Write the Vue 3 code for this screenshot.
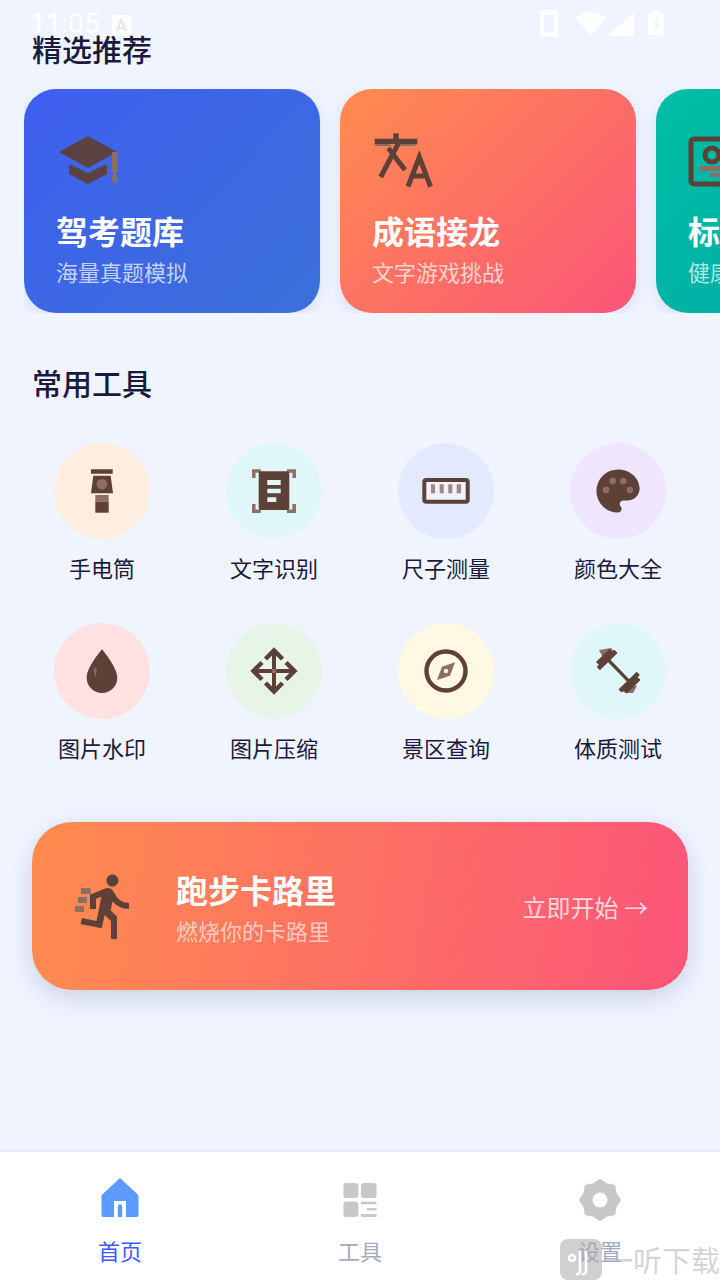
<template>
  <div class="page">
    <div class="status-bar">
      <span class="time">11:05</span>
      <span class="ime">A</span>
      <svg class="status-icons" width="124" height="28" viewBox="0 0 124 28">
        <path fill-rule="evenodd" fill="#fff" d="M2 0h14a2 2 0 0 1 2 2v23a2 2 0 0 1-2 2H2a2 2 0 0 1-2-2V2a2 2 0 0 1 2-2zM4 5v17h10V5z" />
        <path fill="#fff" d="M36 8Q51-4 66 8L51 26z" />
        <path fill="#fff" d="M94 2v24H68z" />
        <path fill="#fff" d="M112 0h8v3h4v22h-16V3h4z" />
        <path fill="#f0f4ff" d="M117 6l-4 10h3l-1 7 5-10h-3l1-7z" />
      </svg>
    </div>

    <h2 class="heading first">精选推荐</h2>

    <div class="featured">
      <div v-for="card in cards" :key="card.title" class="feature-card" :class="card.tone">
        <svg v-if="card.tone === 'blue'" class="feature-icon" viewBox="0 0 64 64">
          <path fill="#5d4037" fill-opacity=".95" d="M3 24L32 8l29 16-29 16z" />
          <path fill="#5d4037" fill-opacity=".95" d="M13 36v10l19 10 19-10V36l-19 9z" />
          <path fill="#8d6e63" d="M56 24h5.500v20H56zM58.750 43c2 3.500 2.750 5.500 2.750 9a2.750 3 0 0 1-5.500 0c0-3.500.75-5.500 2.750-9z" />
        </svg>
        <svg v-else-if="card.tone === 'orange'" class="feature-icon" viewBox="0 0 64 64">
          <path fill="#8d6e63" d="M3 16h13l12 4-3-4h21l-4 2-39 0z" />
          <path fill="#5d4037" d="M2.700 10.700h42.600V16H2.700zM21.300 5.300h5.400v5.400h-5.400z" />
          <path fill="none" stroke="#5d4037" stroke-width="5" d="M16.300 20L33 42M26.300 15.300L8.700 49" />
          <path fill="none" stroke="#5d4037" stroke-width="5" d="M36 58.700L47.300 29l11.200 29.700M39 48h17" />
        </svg>
        <svg v-else class="feature-icon" viewBox="0 0 64 64">
          <rect x="3" y="11" width="48" height="45" rx="3" fill="none" stroke="#5d4037" stroke-width="5" />
          <circle cx="24" cy="27" r="7" fill="none" stroke="#5d4037" stroke-width="5" />
          <path fill="#8d6e63" d="M12 38h30v5H12zM22 45h20v4H22z" />
        </svg>
        <div class="feature-title">{{ card.title }}</div>
        <div class="feature-sub">{{ card.sub }}</div>
      </div>
    </div>

    <h2 class="heading second">常用工具</h2>

    <div class="tools">
      <div class="tool">
        <div class="tool-circle" style="background: #ffeee0">
          <svg class="tool-icon" viewBox="0 0 48 48">
            <path fill="#5d4037" d="M13 2.300h21.700v4.400H13zM15.300 8.700h17.400L35 26.300H13z" />
            <circle cx="24" cy="17.300" r="5.300" fill="#8d6e63" />
            <path fill="#8d6e63" d="M17.300 28h13.400v6.700H17.300z" />
            <path fill="#5d4037" d="M17.300 34.700h13.400v11H17.300z" />
          </svg>
        </div>
        <span class="tool-label">手电筒</span>
      </div>
      <div class="tool">
        <div class="tool-circle" style="background: #dff7f9">
          <svg class="tool-icon" viewBox="0 0 48 48">
            <path fill="none" stroke="#8d6e63" stroke-width="3.500" d="M3.800 11V4h7M37 4h7.200v7M3.800 37v7.200h7M37 44.200h7.200V37" />
            <path fill="#5d4037" fill-rule="evenodd" d="M10.700 4.300h26.600a2 2 0 0 1 2 2V41a2 2 0 0 1-2 2H10.700a2 2 0 0 1-2-2V6.300a2 2 0 0 1 2-2zM17.300 13v5h13.400v-5zM17.300 21.700v4.600h13.400v-4.600zM17.300 30.300V35h9v-4.700z" />
          </svg>
        </div>
        <span class="tool-label">文字识别</span>
      </div>
      <div class="tool">
        <div class="tool-circle" style="background: #e3e9ff">
          <svg class="tool-icon" viewBox="0 0 48 48">
            <rect x="2.300" y="13" width="43.400" height="21.700" rx="2" fill="#eef1ff" stroke="#5d4037" stroke-width="4" />
            <path fill="#a1887f" d="M9 17.300h4v9H9zM17.700 17.300h4v9h-4zM26.300 17.300h4v9h-4zM34.700 17.300H39v9h-4.300z" />
          </svg>
        </div>
        <span class="tool-label">尺子测量</span>
      </div>
      <div class="tool">
        <div class="tool-circle" style="background: #f0e5ff">
          <svg class="tool-icon" viewBox="2 2 20 20">
            <path fill="#5d4037" d="M12 3a9 9 0 0 0 0 18c.83 0 1.500-.67 1.500-1.500 0-.39-.15-.74-.39-1.010-.23-.26-.38-.61-.38-.99 0-.83.67-1.500 1.500-1.500H16c2.760 0 5-2.240 5-5 0-4.420-4.030-8-9-8z" />
            <circle cx="9.800" cy="7.800" r="1.350" fill="#8d6e63" />
            <circle cx="14.200" cy="7.800" r="1.350" fill="#8d6e63" />
            <circle cx="7" cy="11.600" r="1.350" fill="#8d6e63" />
            <circle cx="17" cy="11.600" r="1.350" fill="#8d6e63" />
          </svg>
        </div>
        <span class="tool-label">颜色大全</span>
      </div>

      <div class="tool">
        <div class="tool-circle" style="background: #ffe1e1">
          <svg class="tool-icon" viewBox="0 0 48 48">
            <path fill="#5d4037" d="M24 2.300C24 2.300 8.700 20 8.700 30.700a15.300 15.300 0 0 0 30.600 0C39.300 20 24 2.300 24 2.300z" />
            <path fill="#8d6e63" d="M16.500 20l2.300 3-1 7c-1.500-3-2.300-6-1.300-10z" />
          </svg>
        </div>
        <span class="tool-label">图片水印</span>
      </div>
      <div class="tool">
        <div class="tool-circle" style="background: #e7f5e9">
          <svg class="tool-icon" viewBox="0 0 48 48">
            <path fill="none" stroke="#5d4037" stroke-width="4" d="M24 4v40M4 24h40" />
            <path fill="none" stroke="#5d4037" stroke-width="4.500" d="M15.500 12L24 3.500 32.500 12M15.500 36l8.500 8.500 8.500-8.500M12 15.500L3.500 24l8.500 8.500M36 15.500l8.500 8.500-8.500 8.500" />
            <rect x="22" y="22" width="4" height="4" fill="#8d6e63" />
          </svg>
        </div>
        <span class="tool-label">图片压缩</span>
      </div>
      <div class="tool">
        <div class="tool-circle" style="background: #fff8e3">
          <svg class="tool-icon" viewBox="0 0 48 48">
            <circle cx="24" cy="24" r="19.500" fill="none" stroke="#5d4037" stroke-width="4.400" />
            <path fill="#8d6e63" d="M33 15.300L28 28.700 15 33l5-13.300z" />
            <circle cx="24" cy="24" r="2.200" fill="#fff8e3" />
          </svg>
        </div>
        <span class="tool-label">景区查询</span>
      </div>
      <div class="tool">
        <div class="tool-circle" style="background: #dff7f9">
          <svg class="tool-icon" viewBox="0 0 48 48">
            <path fill="#8d6e63" d="M5 3l12-2 5 5-11 9zM28 44l6-8 9 3-4 7-7 0z" transform="translate(0 0)" />
            <path fill="none" stroke="#5d4037" stroke-width="3.300" d="M14.300 13l20 20.700" />
            <path fill="none" stroke="#5d4037" stroke-width="4.500" d="M22 4.300L4.300 21.700M17 3.500L3.500 16.500M44.300 26.300L26 44M45 31.500L31 45" />
          </svg>
        </div>
        <span class="tool-label">体质测试</span>
      </div>
    </div>

    <div class="banner">
      <svg class="banner-icon" viewBox="0 0 24 24">
        <path fill="#8d6e63" d="M3 6h3.200v2H3zM2 9h3v2H2zM1 12h3v2H1z" />
        <path fill="#5d4037" d="M13.490 5.480c1.100 0 2-.9 2-2s-.9-2-2-2-2 .9-2 2 .9 2 2 2zm-3.600 13.900l1-4.400 2.100 2v6h2v-7.500l-2.100-2 .6-3c1.300 1.500 3.300 2.500 5.500 2.500v-2c-1.900 0-3.500-1-4.300-2.400l-1-1.600c-.4-.6-1-1-1.700-1-.3 0-.5.1-.8.1l-5.200 2.200v4.700h2v-3.400l1.800-.7-1.600 8.100-4.900-1-.4 2 7 1.400z" />
      </svg>
      <div class="banner-text">
        <div class="banner-title">跑步卡路里</div>
        <div class="banner-sub">燃烧你的卡路里</div>
      </div>
      <div class="banner-cta">立即开始 →</div>
    </div>

    <nav class="tabbar">
      <div class="tab active">
        <svg class="tab-icon" viewBox="0 0 44 44">
          <path fill="#5c9aff" d="M22 0l17.700 16.500a2 2 0 0 1 .8 1.500v19a2 2 0 0 1-2 2H5.500a2 2 0 0 1-2-2V18a2 2 0 0 1 .8-1.500z" />
          <path fill="#fff" d="M16 39V23h12v16h-3.800V28.500a2 2 0 0 0-4.400 0V39z" />
        </svg>
        <span>首页</span>
      </div>
      <div class="tab">
        <svg class="tab-icon" viewBox="0 0 44 44">
          <g fill="#c8c8c8">
            <rect x="5.400" y="5" width="15" height="15" rx="3" />
            <rect x="23" y="5" width="15.500" height="15" rx="3" />
            <rect x="5.400" y="23.500" width="15" height="15.500" rx="3" />
            <rect x="23" y="23.700" width="15.500" height="2.500" />
            <rect x="29" y="30" width="9.500" height="2.500" />
            <rect x="23" y="36" width="15.500" height="3" />
          </g>
        </svg>
        <span>工具</span>
      </div>
      <div class="tab">
        <svg class="tab-icon" viewBox="-22 -22 44 44">
          <path fill="#c8c8c8" stroke="#c8c8c8" stroke-width="3" stroke-linejoin="round" fill-rule="evenodd" d="M19.500 0L15.200 6.300 13.800 13.800 6.300 15.200 0 19.500-6.300 15.200-13.800 13.800-15.200 6.300-19.500 0-15.200-6.300-13.800-13.800-6.300-15.200 0-19.500 6.300-15.200 13.800-13.800 15.200-6.300z" />
          <circle r="7.500" fill="#fff" />
        </svg>
        <span>设置</span>
      </div>
    </nav>

    <div class="watermark">
      <div class="wm-logo">
        <svg width="42" height="41" viewBox="0 0 42 41">
          <circle cx="12" cy="19" r="3" fill="none" stroke="#fff" stroke-width="2.500" />
          <path fill="none" stroke="#fff" stroke-width="2.500" d="M20 12v20a3 3 0 0 1-4 3M26 12v20a3 3 0 0 1-4 3" />
        </svg>
      </div>
      <span class="wm-text">一听下载</span>
    </div>
  </div>
</template>

<script setup>
const cards = [
  { title: '驾考题库', sub: '海量真题模拟', tone: 'blue' },
  { title: '成语接龙', sub: '文字游戏挑战', tone: 'orange' },
  { title: '标准体重', sub: '健康体重计算', tone: 'teal' }
];
</script>

<style>
html,
body {
  margin: 0;
  background: #f0f4ff;
}
</style>

<style scoped>
.page {
  position: relative;
  width: 720px;
  height: 1280px;
  overflow: hidden;
  display: flex;
  flex-direction: column;
  background: #f0f4ff;
  font-family: "Noto Sans CJK SC", "Noto Sans", sans-serif;
  color: #1a1a3e;
}

.status-bar {
  position: absolute;
  top: 0;
  left: 0;
  right: 0;
  height: 48px;
  padding: 0 56px 0 30px;
  display: flex;
  align-items: center;
  color: #fff;
  z-index: 2;
}

.time {
  font-family: Roboto, sans-serif;
  font-size: 28px;
  line-height: 48px;
}

.ime {
  width: 19px;
  height: 20px;
  margin-left: 12px;
  margin-top: 1px;
  background: #fff;
  border-radius: 2px;
  color: #e3e8f5;
  font-family: Roboto, sans-serif;
  font-size: 17px;
  font-weight: 700;
  line-height: 20px;
  text-align: center;
}

.status-icons {
  margin-left: auto;
  margin-top: -1px;
}

.heading {
  margin: 0;
  padding-left: 32px;
  font-size: 30px;
  font-weight: 500;
  line-height: 40px;
}

.heading.first {
  margin-top: 28px;
}

.heading.second {
  margin-top: 49px;
}

.featured {
  margin: 21px 0 0 24px;
  height: 224px;
  overflow: hidden;
  display: flex;
  gap: 20px;
}

.feature-card {
  flex: 0 0 296px;
  height: 224px;
  box-sizing: border-box;
  padding: 39px 0 0 32px;
  border-radius: 32px;
  color: #fff;
  box-shadow: 0 4px 16px rgba(60, 80, 160, 0.12);
}

.feature-card.blue {
  background: linear-gradient(135deg, #3f5ff0, #3b70d8);
}

.feature-card.orange {
  background: linear-gradient(135deg, #ff8c4f, #fb5579);
}

.feature-card.teal {
  background: linear-gradient(135deg, #00bfa5, #00a5a5);
}

.feature-icon {
  display: block;
  width: 64px;
  height: 64px;
}

.feature-title {
  margin-top: 16px;
  font-size: 32px;
  font-weight: 700;
  line-height: 44px;
  white-space: nowrap;
}

.feature-sub {
  margin-top: 4px;
  font-size: 22px;
  line-height: 30px;
  color: rgba(255, 255, 255, 0.7);
  white-space: nowrap;
}

.tools {
  margin-top: 41px;
  padding: 0 16px;
  display: grid;
  grid-template-columns: repeat(4, 172px);
  row-gap: 40px;
}

.tool {
  display: flex;
  flex-direction: column;
  align-items: center;
  gap: 12px;
}

.tool-circle {
  width: 96px;
  height: 96px;
  border-radius: 50%;
  display: flex;
  align-items: center;
  justify-content: center;
}

.tool-icon {
  width: 48px;
  height: 48px;
}

.tool-label {
  font-size: 22px;
  line-height: 32px;
}

.banner {
  margin: 59px 32px 0;
  height: 168px;
  box-sizing: border-box;
  padding: 0 40px;
  border-radius: 40px;
  display: flex;
  align-items: center;
  color: #fff;
  background: linear-gradient(100deg, #ff8c4f, #fb5579);
  box-shadow: 0 8px 24px rgba(60, 70, 120, 0.2);
}

.banner-icon {
  flex: none;
  width: 72px;
  height: 72px;
}

.banner-text {
  margin-left: 32px;
}

.banner-title {
  font-size: 32px;
  font-weight: 700;
  line-height: 44px;
}

.banner-sub {
  margin-top: 4px;
  font-size: 22px;
  line-height: 30px;
  color: rgba(255, 255, 255, 0.6);
}

.banner-cta {
  margin-left: auto;
  font-size: 24px;
  color: rgba(255, 255, 255, 0.75);
  white-space: nowrap;
}

.tabbar {
  margin-top: auto;
  height: 130px;
  box-sizing: border-box;
  padding-top: 26px;
  display: flex;
  background: #fff;
  border-top: 2px solid #e4eafd;
}

.tab {
  flex: 1;
  display: flex;
  flex-direction: column;
  align-items: center;
  gap: 13px;
  font-size: 22px;
  line-height: 30px;
  color: #a3aac4;
}

.tab.active {
  color: #3d5afe;
}

.tab-icon {
  width: 44px;
  height: 44px;
}

.watermark {
  position: absolute;
  left: 560px;
  top: 1239px;
  display: flex;
  align-items: center;
  white-space: nowrap;
}

.wm-logo {
  width: 42px;
  height: 41px;
  border-radius: 8px;
  background: rgba(170, 170, 170, 0.55);
}

.wm-logo svg {
  display: block;
}

.wm-text {
  margin-left: 2px;
  font-size: 29px;
  line-height: 41px;
  color: rgba(170, 170, 170, 0.5);
}
</style>
